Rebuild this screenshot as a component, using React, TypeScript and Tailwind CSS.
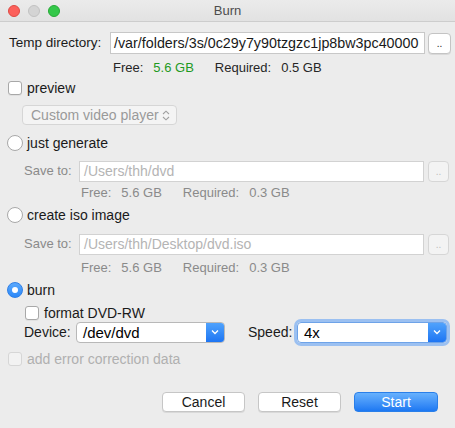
import React from "react";

const font = { fontFamily: '"Liberation Sans", Arial, sans-serif' };

function Checkbox({ disabled = false }: { disabled?: boolean }) {
    return (
        <div
            className={`w-[14px] h-[14px] rounded-[3px] border ${
                disabled ? "border-[#d6d6d6] bg-[#f2f2f2]" : "border-[#a8a8a8] bg-white shadow-[0_1px_0_rgba(0,0,0,0.05)]"
            }`}
        />
    );
}

function Radio({ checked = false }: { checked?: boolean }) {
    if (checked) {
        return (
            <div className="w-[16px] h-[16px] rounded-full bg-gradient-to-b from-[#5aa9fd] to-[#2a88f8] border border-[#2f7fe6] flex items-center justify-center">
                <div className="w-[6px] h-[6px] rounded-full bg-white" />
            </div>
        );
    }
    return <div className="w-[16px] h-[16px] rounded-full border border-[#a8a8a8] bg-white" />;
}

function Chevron() {
    return (
        <svg width="8" height="6" viewBox="0 0 8 6">
            <path d="M1 1.5 L4 4.5 L7 1.5" fill="none" stroke="white" strokeWidth="1.3" />
        </svg>
    );
}

function Select({ value, width, focused = false }: { value: string; width: number; focused?: boolean }) {
    return (
        <div
            className={`h-[21px] flex rounded-[4px] border ${
                focused ? "border-[#6ea3e8] outline outline-[3px] outline-[#9bc0f1]" : "border-[#b8b8b8]"
            } bg-white overflow-hidden`}
            style={{ width }}
        >
            <div className="flex-1 pl-[6px] text-[15px] leading-[19px] text-black">{value}</div>
            <div className="w-[18px] bg-gradient-to-b from-[#4fa2fc] to-[#1d75f3] flex items-center justify-center">
                <Chevron />
            </div>
        </div>
    );
}

function FreeRow({ pl, free, req, green = false }: { pl: number; free: string; req: string; green?: boolean }) {
    return (
        <div className="h-[16px] flex items-center" style={{ paddingLeft: pl }}>
            <span className={green ? "text-[#262626]" : "text-[#8a8a8a]"}>Free:</span>
            <span className={`ml-[10px] ${green ? "text-[#1f9a1f]" : "text-[#8a8a8a]"}`}>{free}</span>
            <span className={`ml-[21px] ${green ? "text-[#262626]" : "text-[#8a8a8a]"}`}>Required:</span>
            <span className={`ml-[10px] ${green ? "text-[#262626]" : "text-[#8a8a8a]"}`}>{req}</span>
        </div>
    );
}

function SaveTo({ path }: { path: string }) {
    return (
        <div className="h-[22px] flex items-center">
            <span className="ml-[24px] w-[55px] text-[#8a8a8a]">Save to:</span>
            <div className="w-[345px] h-[21px] bg-white border border-[#d2d2d2] pl-[4px] text-[#b4b4b4] leading-[19px] text-[14px]">
                {path}
            </div>
            <div className="ml-[4px] w-[21px] h-[21px] rounded-[4px] border border-[#d6d6d6] bg-[#f3f3f3] text-[#bdbdbd] text-[10px] flex items-center justify-center">
                ..
            </div>
        </div>
    );
}

export default function App() {
    return (
        <div className="w-[455px] h-[428px] bg-[#ececec] text-[13px] text-[#1a1a1a] overflow-hidden" style={font}>
            {/* title bar */}
            <div className="h-[22px] border-b border-[#cdcdcd] bg-gradient-to-b from-[#ebebeb] to-[#e2e2e2] flex items-center relative">
                <div className="flex gap-[8px] ml-[8px]">
                    <div className="w-[12px] h-[12px] rounded-full bg-[#fc605b] border border-[#de4a44]" />
                    <div className="w-[12px] h-[12px] rounded-full bg-[#d4d4d4] border border-[#c2c2c2]" />
                    <div className="w-[12px] h-[12px] rounded-full bg-[#34c84a] border border-[#27aa37]" />
                </div>
                <div className="absolute left-0 right-0 text-center text-[13px] text-[#4d4d4d]">Burn</div>
            </div>

            {/* temp directory */}
            <div className="mt-[10px] h-[22px] flex items-center">
                <span className="ml-[9px] w-[101px] text-[13.5px]">Temp directory:</span>
                <div className="w-[315px] h-[22px] bg-white border border-[#c8c8c8] pl-[3px] text-[14.3px] leading-[20px] whitespace-nowrap overflow-hidden">
                    /var/folders/3s/0c29y7y90tzgzc1jp8bw3pc40000
                </div>
                <div className="ml-[3px] w-[23px] h-[21px] rounded-[4px] border border-[#c4c4c4] bg-white shadow-[0_1px_0_rgba(0,0,0,0.08)] text-[10px] flex items-center justify-center">
                    ..
                </div>
            </div>
            <div className="mt-[6px]">
                <FreeRow pl={113} free="5.6 GB" req="0.5 GB" green />
            </div>

            {/* preview */}
            <div className="mt-[4px] h-[16px] flex items-center pl-[8px] gap-[5px]">
                <Checkbox />
                <span className="text-[14px]">preview</span>
            </div>
            <div className="mt-[9px] h-[20px] ml-[22px] w-[155px] rounded-[4px] border border-[#d6d6d6] bg-[#f4f4f4] flex items-center pl-[8px] text-[#9a9a9a] text-[14px]">
                <span className="flex-1">Custom video player</span>
                <svg width="8" height="11" viewBox="0 0 8 11" className="mr-[6px]">
                    <path d="M1 4 L4 1.2 L7 4 M1 7 L4 9.8 L7 7" fill="none" stroke="#a0a0a0" strokeWidth="1.1" />
                </svg>
            </div>

            {/* just generate */}
            <div className="mt-[10px] h-[16px] flex items-center pl-[7px] gap-[4px]">
                <Radio />
                <span className="text-[14px]">just generate</span>
            </div>
            <div className="mt-[9px]">
                <SaveTo path="/Users/thh/dvd" />
            </div>
            <div className="mt-[3px]">
                <FreeRow pl={81} free="5.6 GB" req="0.3 GB" />
            </div>

            {/* create iso */}
            <div className="mt-[6px] h-[16px] flex items-center pl-[7px] gap-[4px]">
                <Radio />
                <span className="text-[14px]">create iso image</span>
            </div>
            <div className="mt-[10px]">
                <SaveTo path="/Users/thh/Desktop/dvd.iso" />
            </div>
            <div className="mt-[5px]">
                <FreeRow pl={81} free="5.6 GB" req="0.3 GB" />
            </div>

            {/* burn */}
            <div className="mt-[6px] h-[16px] flex items-center pl-[7px] gap-[4px]">
                <Radio checked />
                <span className="text-[14px]">burn</span>
            </div>
            <div className="mt-[7px] h-[16px] flex items-center pl-[25px] gap-[5px]">
                <Checkbox />
                <span className="text-[14px]">format DVD-RW</span>
            </div>
            <div className="h-[22px] flex items-center">
                <span className="ml-[24px] w-[52px] text-[14px]">Device:</span>
                <Select value="/dev/dvd" width={149} />
                <span className="ml-[23px] w-[49px] text-[14px]">Speed:</span>
                <Select value="4x" width={150} focused />
            </div>

            {/* error correction */}
            <div className="mt-[8px] h-[16px] flex items-center pl-[8px] gap-[5px]">
                <Checkbox disabled />
                <span className="text-[14px] text-[#b0b0b0]">add error correction data</span>
            </div>

            {/* buttons */}
            <div className="mt-[25px] h-[20px] flex pl-[162px] gap-[13px]">
                <div className="w-[83px] h-[20px] rounded-[4px] border border-[#c6c6c6] bg-white shadow-[0_1px_0_rgba(0,0,0,0.08)] flex items-center justify-center text-[14px]">
                    Cancel
                </div>
                <div className="w-[83px] h-[20px] rounded-[4px] border border-[#c6c6c6] bg-white shadow-[0_1px_0_rgba(0,0,0,0.08)] flex items-center justify-center text-[14px]">
                    Reset
                </div>
                <div className="w-[84px] h-[20px] rounded-[4px] border border-[#2a7fe9] bg-gradient-to-b from-[#67b1fd] to-[#1c78f2] flex items-center justify-center text-[14px] text-white">
                    Start
                </div>
            </div>
        </div>
    );
}
